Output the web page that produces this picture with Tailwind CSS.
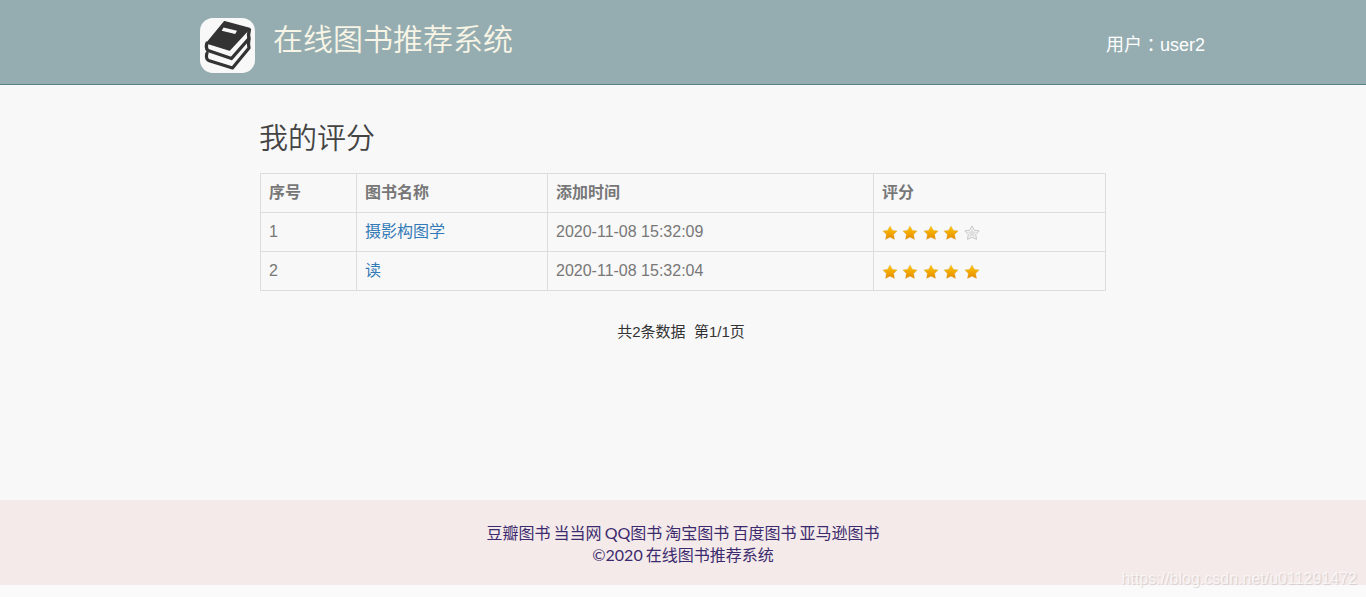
<!DOCTYPE html>
<html lang="zh-CN">
<head>
  <meta charset="UTF-8" />
  <title>在线图书推荐系统</title>
  <script src="https://cdn.jsdelivr.net/npm/@tailwindcss/browser@4"></script>
</head>
<body class="bg-[#f8f8f8] h-[597px] overflow-hidden flex flex-col font-['Liberation_Sans','Noto_Sans_CJK_SC',sans-serif]">

  <svg class="absolute w-0 h-0">
    <defs>
      <linearGradient id="gold" x1="0" y1="0" x2="0" y2="1">
        <stop offset="0" stop-color="#ffc800" />
        <stop offset="1" stop-color="#e58a00" />
      </linearGradient>
      <symbol id="star-on" viewBox="0 0 16 16">
        <path d="M8 .9l2.300 4.300 4.900.7-3.500 3.500.8 5L8 12.200l-4.500 2.200.8-5L.8 5.900l4.900-.7z" fill="url(#gold)" stroke="#d9b36a" stroke-opacity=".6" stroke-width=".6" />
      </symbol>
      <symbol id="star-off" viewBox="0 0 16 16">
        <path d="M8 .9l2.300 4.300 4.900.7-3.500 3.500.8 5L8 12.200l-4.500 2.200.8-5L.8 5.900l4.900-.7z" fill="#f2f2f2" stroke="#c2c2c2" stroke-width=".9" />
        <path d="M8 4l1.300 2.500 2.900.4-2.100 2 .5 2.900L8 10.500l-2.600 1.300.5-2.900-2.100-2 2.900-.4z" fill="#dedede" />
      </symbol>
    </defs>
  </svg>

  <!-- 顶部 -->
  <header class="h-[85px] shrink-0 bg-[#95adb1] border-b border-[#578087]">
    <div class="flex justify-between pl-[200px] pr-[161px]">
      <div class="flex">
        <svg class="mt-[18px] w-[55px] h-[55px]" viewBox="0 0 55 55">
          <rect width="55" height="55" rx="13" fill="#f8f8f8" />
          <path d="M24.500 3.800L49.500 10.500 29.500 32 7 25z" fill="#333" stroke="#333" stroke-width="1.500" stroke-linejoin="round" />
          <path d="M23.500 9.500l13.500 3.300-1.800 3.200-13.500-3.300z" fill="#f8f8f8" />
          <path d="M7.500 24C5.800 27 6 31 8 32.500L31.500 40.500 49 20.500 48.500 17 49.500 10.500" fill="none" stroke="#333" stroke-width="3.400" stroke-linejoin="round" />
          <path d="M7.500 34C5.800 37 6 41 8.500 42.500L32.500 50 49 30 48.500 26 49 20.500" fill="none" stroke="#333" stroke-width="3.200" stroke-linejoin="round" />
        </svg>
        <h1 class="ml-[18px] mt-[18px] text-[30px] leading-[44px] font-[350] text-[#f8f5e6]">在线图书推荐系统</h1>
      </div>
      <div class="mt-[32px] text-[18px] leading-[26px] text-white">用户<span class="relative top-px font-['Noto_Sans_CJK_TC',sans-serif] leading-none" lang="zh-TW">：</span>user2</div>
    </div>
  </header>

  <!-- 评分列表 -->
  <main class="h-[415px] shrink-0 pl-[260px]">
    <h2 class="-ml-px pt-[33px] h-[88px] text-[29px] leading-[42px] font-[350] text-[#444]">我的评分</h2>
    <table class="w-[846px] table-fixed border-collapse text-base leading-[22px] text-[#777] [&_td]:border [&_td]:border-[#ddd] [&_th]:border [&_th]:border-[#ddd] [&_td]:p-2 [&_th]:p-2 [&_th]:text-left [&_tr]:h-[39px]">
      <colgroup>
        <col class="w-[96px]" />
        <col class="w-[191px]" />
        <col class="w-[326px]" />
        <col class="w-[232px]" />
      </colgroup>
      <tr>
        <th>序号</th>
        <th>图书名称</th>
        <th>添加时间</th>
        <th>评分</th>
      </tr>
      <tr>
        <td>1</td>
        <td><a class="text-[#337ab7]">摄影构图学</a></td>
        <td>2020-11-08 15:32:09</td>
        <td>
          <div class="flex gap-[4.450px] pt-px">
            <svg class="w-4 h-4"><use href="#star-on" /></svg>
            <svg class="w-4 h-4"><use href="#star-on" /></svg>
            <svg class="w-4 h-4"><use href="#star-on" /></svg>
            <svg class="w-4 h-4"><use href="#star-on" /></svg>
            <svg class="w-4 h-4"><use href="#star-off" /></svg>
          </div>
        </td>
      </tr>
      <tr>
        <td>2</td>
        <td><a class="text-[#337ab7]">读</a></td>
        <td>2020-11-08 15:32:04</td>
        <td>
          <div class="flex gap-[4.450px] pt-px">
            <svg class="w-4 h-4"><use href="#star-on" /></svg>
            <svg class="w-4 h-4"><use href="#star-on" /></svg>
            <svg class="w-4 h-4"><use href="#star-on" /></svg>
            <svg class="w-4 h-4"><use href="#star-on" /></svg>
            <svg class="w-4 h-4"><use href="#star-on" /></svg>
          </div>
        </td>
      </tr>
    </table>
    <div class="mt-[30px] w-[842px] text-center text-[15px] leading-[21px] text-[#333] whitespace-pre">共2条数据  第1/1页</div>
  </main>

  <!-- 底部 -->
  <footer class="h-[85px] shrink-0 bg-[#f4eae9] pt-[22px] text-center text-base leading-[22px] text-[#3c2a6f] font-['Lato','Noto_Sans_CJK_SC',sans-serif]">
    <p class="[word-spacing:-1px]">豆瓣图书 当当网 QQ图书 淘宝图书 百度图书 亚马逊图书</p>
    <p class="[word-spacing:-1px]">©2020 在线图书推荐系统</p>
  </footer>
  <div class="grow bg-[#fafafa]"></div>

  <div class="absolute right-[9px] top-[568px] text-base leading-[22px] text-white/70 [text-shadow:1px_1px_1px_rgba(0,0,0,0.13)]">https://blog.csdn.net/u011291472</div>
</body>
</html>
